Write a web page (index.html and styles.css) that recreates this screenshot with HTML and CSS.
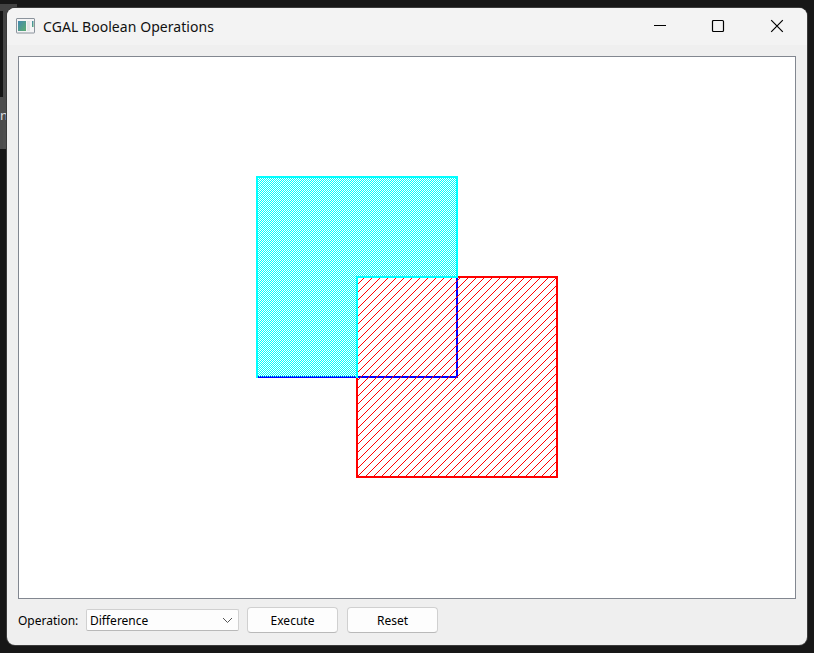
FILE: index.html
```
<!DOCTYPE html>
<html lang="en">
<head>
<meta charset="utf-8">
<title>CGAL Boolean Operations</title>
<link rel="stylesheet" href="styles.css">
</head>
<body>
<div class="behind"><span>n</span></div>
<main class="window">
  <header class="titlebar">
    <svg class="app-icon" width="19" height="16" viewBox="0 0 19 16">
      <defs><linearGradient id="app" x2="1" y2="1"><stop stop-color="#4288b0"/><stop offset="1" stop-color="#5cad70"/></linearGradient></defs>
      <rect x=".5" y=".5" width="18" height="14.5" rx=".5" fill="#f4f4f5" stroke="#8b939c"/>
      <path fill="url(#app)" d="M2 3h8v10H2z"/><path fill="#e2e4e6" d="M11 3h3v10h-3z"/><path fill="url(#app)" d="M16 3h1.5v6H16z"/>
    </svg>
    <h1>CGAL Boolean Operations</h1>
    <div class="controls">
      <svg width="14" height="14" viewBox="0 0 14 14"><path d="M1 6.5h12"/></svg>
      <svg width="14" height="14" viewBox="0 0 14 14"><rect x="1.5" y="1.5" width="11" height="11" rx="1"/></svg>
      <svg width="14" height="14" viewBox="0 0 14 14"><path d="M1.2 1.2l11.6 11.6M12.8 1.2L1.2 12.8"/></svg>
    </div>
  </header>
  <section class="canvas">
    <svg width="776" height="541" viewBox="19 57 776 541" shape-rendering="crispEdges">
      <defs>
        <pattern id="dense" width="2" height="2" patternUnits="userSpaceOnUse"><path fill="#0ff" d="M1 0h1v1H1zM0 1h1v1H0z"/></pattern>
        <pattern id="hatch" width="8" height="8" patternUnits="userSpaceOnUse"><path fill="#f00" d="M0 1h1v1H0zM1 0h1v1H1zM2 7h1v1H2zM3 6h1v1H3zM4 5h1v1H4zM5 4h1v1H5zM6 3h1v1H6zM7 2h1v1H7z"/></pattern>
      </defs>
      <path fill="#00f" d="M258 376h200v2H258zM456 276h2v102h-2z"/>
      <path fill="url(#hatch)" d="M358 278h198v198H358z"/>
      <path fill="#f00" d="M458 276h100v202H356V378h2v98h198V278h-98z"/>
      <path fill="url(#dense)" d="M258 178h198v98H356v101h-98z"/>
      <path fill="#0ff" d="M256 176h202v102H358v100h-2V276h100v-98H258v200h-2z"/>
    </svg>
  </section>
  <footer class="toolbar">
    <span class="label">Operation:</span>
    <div class="select"><span>Difference</span><svg width="11" height="7" viewBox="0 0 11 7"><path d="M1 1l4.5 4.5L10 1"/></svg></div>
    <button class="execute">Execute</button>
    <button>Reset</button>
  </footer>
</main>
</body>
</html>
```
FILE: styles.css
```
* { box-sizing: border-box; }
body { margin: 0; width: 814px; height: 653px; overflow: hidden; background: #171717; padding: 8px 7px; position: relative; font-family: "Noto Sans", sans-serif; }
.behind { position: absolute; left: 0; top: 4px; width: 17px; height: 145px; background: linear-gradient(#424242, #505050); border-left: 3px solid #181818; border-image: linear-gradient(#424242 0 8px, #151515 8px 93px, #4c4c4c 93px) 1; color: #ddd; font: 13px "Noto Sans", sans-serif; }
.behind span { position: absolute; left: -3px; top: 102px; }
.window { position: relative; width: 800px; height: 637px; border-radius: 8px; overflow: hidden; background: #efefef; display: flex; flex-direction: column; box-shadow: 0 0 0 1px #3b3b3b; }
.titlebar { height: 37px; flex: none; background: #f3f3f3; display: flex; align-items: center; padding-left: 9px; }
.app-icon { margin-bottom: 1px; }
h1 { margin: 0 0 0 8px; font: 14px/20px "Noto Sans", sans-serif; color: #111; width: 171px; white-space: nowrap; letter-spacing: .06px; }
.controls { margin-left: auto; display: flex; gap: 45px; padding: 0 23px 1px 0; }
.controls svg { fill: none; stroke: #000; stroke-width: 1.2; }
.controls svg:first-child { position: relative; left: 1px; }
.canvas { margin: 11px 11px 0; height: 543px; flex: none; background: #fff; border: 1px solid #828790; }
.canvas svg { display: block; }
.toolbar { height: 42px; padding-left: 11px; display: flex; align-items: center; font: 12px/18px "Noto Sans", sans-serif; color: #000; }
.label { width: 68px; padding-top: 2px; }
.select { width: 153px; height: 22px; margin-right: 8px; padding: 0 6px 0 3px; border: 1px solid #d0d0d0; border-bottom-color: #b9b9b9; border-radius: 2px; background: #fdfdfd; display: flex; align-items: center; justify-content: space-between; }
.select span { padding-top: 2px; }
.select svg { fill: none; stroke: #555; margin-right: -1px; }
button { width: 91px; height: 26px; padding: 2px 0 0; border: 1px solid #d0d0d0; border-bottom-color: #b9b9b9; border-radius: 4px; background: #fdfdfd; font: inherit; color: #000; }
.execute { margin-right: 9px; }
```
